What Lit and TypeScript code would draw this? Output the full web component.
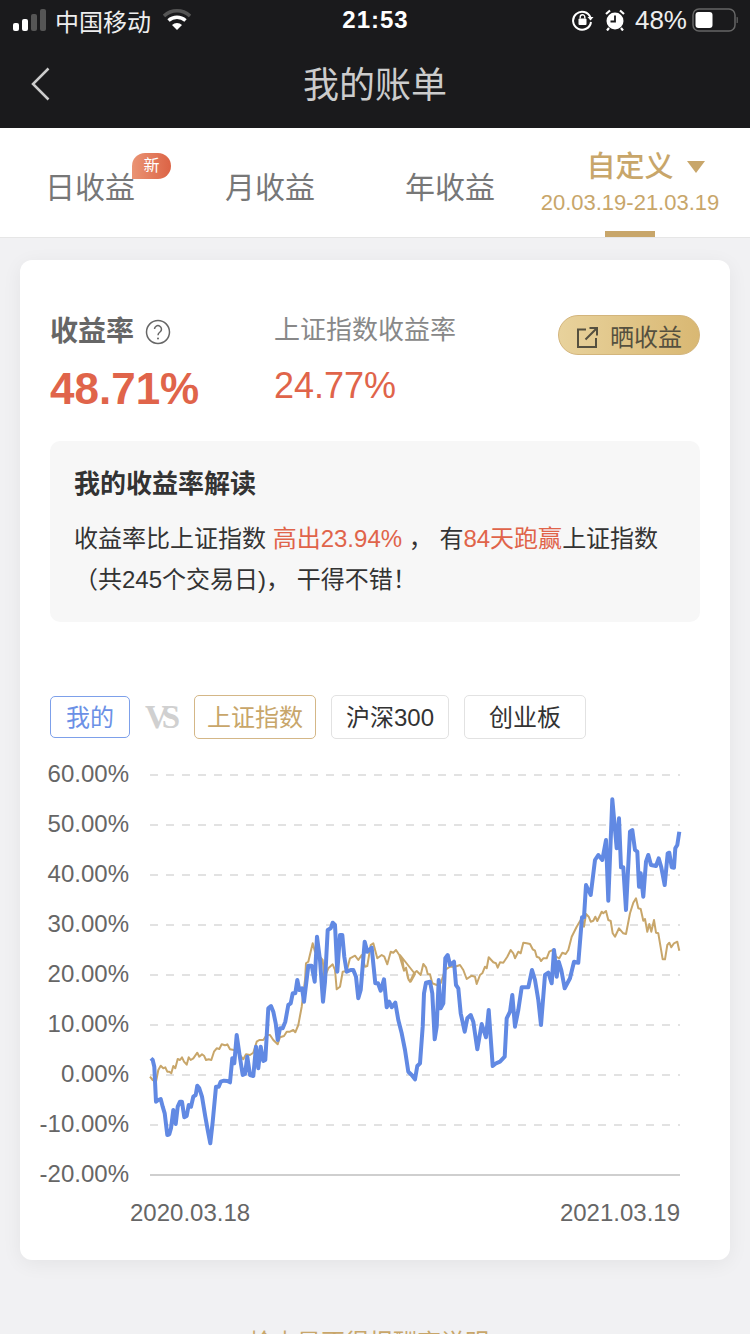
import { LitElement, css, html, svg } from "lit";
import { customElement } from "lit/decorators.js";

// traced from the chart, as [x, y] in chart pixels (zoomed crops / 3)
const zoomA = (p: number[][]) => p.map(([x, y]) => [140 + x / 3, 900 + y / 3]);
const zoomB = (p: number[][]) => p.map(([x, y]) => [400 + x / 3, 780 + y / 3]);

const BLUE = [
    ...zoomA([
        [33, 475], [38, 480], [43, 500], [48, 605], [55, 600], [62, 597], [68, 620], [74, 640], [82, 705], [88, 703],
        [93, 685], [100, 630], [107, 672], [113, 620], [120, 605], [126, 605], [133, 652], [140, 648], [146, 615],
        [153, 620], [160, 590], [167, 585], [172, 557], [178, 565], [186, 590], [196, 650], [204, 695], [211, 730],
        [218, 665], [228, 560], [236, 560], [242, 545], [252, 542], [262, 543], [270, 547], [277, 475], [283, 490],
        [290, 405], [298, 460], [308, 525], [315, 522], [322, 470], [330, 525], [340, 528], [348, 440], [355, 505],
        [362, 440], [370, 483], [376, 480], [385, 325], [393, 318], [400, 335], [407, 370], [413, 420], [420, 385],
        [428, 385], [436, 365], [445, 315], [452, 310], [458, 280], [466, 280], [472, 240], [478, 270], [486, 265],
        [492, 305], [505, 197], [515, 197], [524, 245], [531, 110], [540, 180], [549, 305], [555, 245], [563, 90],
        [572, 85], [578, 68], [585, 75], [592, 215], [600, 105], [607, 105], [613, 170], [620, 215], [632, 210],
        [640, 210], [648, 230], [655, 295], [662, 270], [674, 125], [682, 155], [695, 143], [706, 250], [714, 250],
        [722, 272], [732, 238], [740, 322], [748, 305], [755, 322], [766, 308], [775, 360], [785, 400], [795, 450],
        [805, 515], [815, 525], [825, 538],
    ]),
    ...zoomB([
        [52, 858], [60, 850], [68, 740], [72, 640], [78, 608], [90, 605], [97, 640], [104, 778], [110, 740], [116, 600],
        [122, 685], [130, 670], [136, 535], [143, 525], [150, 555], [162, 545], [168, 615], [175, 625], [182, 700],
        [194, 755], [202, 715], [212, 705], [220, 725], [232, 808], [245, 732], [258, 772], [266, 690], [278, 858],
        [288, 850], [300, 845], [314, 830], [320, 715], [330, 695], [337, 645], [345, 740], [355, 690], [365, 622],
        [385, 622], [396, 570], [405, 600], [415, 660], [423, 735], [435, 585], [445, 578], [455, 610], [462, 510],
        [470, 590], [476, 545], [484, 570], [494, 625], [510, 595], [522, 545], [535, 548], [546, 412], [552, 412],
        [558, 315], [572, 345], [585, 240], [595, 225], [607, 240], [618, 180], [625, 362], [637, 58], [650, 205],
        [657, 115], [663, 262], [670, 262], [678, 390], [690, 155], [697, 150], [705, 210], [712, 215], [717, 320],
        [722, 280], [730, 350], [738, 245], [745, 225], [753, 255], [768, 258], [776, 235], [784, 262], [794, 315],
        [803, 220], [808, 218], [815, 262], [822, 263], [826, 205], [832, 195], [838, 155],
    ]),
];

const GOLD = [
    ...zoomA([
        [30, 530], [38, 540], [48, 545], [55, 510], [62, 497], [70, 505], [76, 502], [82, 515], [88, 515], [94, 520],
        [100, 498], [106, 505], [113, 477], [120, 480], [126, 472], [132, 485], [140, 494], [146, 472], [152, 480],
        [160, 475], [172, 458], [178, 470], [186, 463], [192, 467], [198, 480], [206, 478], [214, 480], [222, 455],
        [230, 445], [238, 447], [245, 433], [255, 436], [262, 433], [270, 448], [282, 450], [292, 450], [300, 465],
        [310, 478], [318, 463], [330, 465], [340, 458], [350, 425], [358, 420], [370, 420], [380, 405], [390, 405],
        [400, 420], [413, 433], [420, 412], [432, 408], [440, 395], [450, 395], [460, 390], [466, 397], [475, 375],
        [485, 320], [495, 240], [498, 190], [505, 185], [518, 130], [525, 155], [535, 165], [548, 180], [553, 235],
        [565, 205], [578, 193], [585, 210], [590, 268], [600, 260], [608, 215], [620, 213], [630, 175], [645, 167],
        [655, 180], [665, 165], [675, 200], [682, 198], [692, 135], [700, 130], [712, 175], [725, 165], [733, 170],
        [742, 193], [752, 155], [760, 158], [768, 150], [778, 165], [792, 212], [798, 203], [806, 240], [812, 245],
        [825, 222],
    ]),
    ...zoomB([
        [0, 525], [8, 545], [12, 572], [18, 565], [24, 595], [30, 605], [42, 580], [50, 573], [62, 585], [70, 552],
        [78, 562], [83, 582], [90, 583], [97, 610], [110, 615], [122, 610], [135, 570], [150, 560], [165, 560], [180, 555],
        [190, 570], [200, 597], [215, 587], [225, 590], [230, 612], [240, 585], [247, 580], [255, 560], [260, 565],
        [266, 532], [280, 547], [288, 550], [293, 563], [300, 547], [310, 548], [322, 530], [332, 510], [340, 520],
        [345, 535], [355, 515], [362, 520], [370, 488], [380, 490], [390, 492], [398, 508], [405, 512], [410, 530],
        [418, 533], [423, 543], [430, 535], [440, 535], [448, 515], [462, 508], [468, 530], [478, 535], [487, 518],
        [497, 522], [505, 510], [515, 470], [530, 440], [545, 415], [552, 440], [558, 402], [566, 410], [572, 425],
        [580, 422], [586, 410], [592, 423], [605, 395], [610, 400], [618, 393], [625, 420], [632, 423], [638, 460],
        [645, 470], [657, 445], [670, 460], [678, 462], [690, 400], [700, 368], [708, 355], [715, 385], [722, 387],
        [730, 422], [735, 417], [742, 455], [748, 432], [754, 455], [762, 420], [768, 458], [775, 460], [788, 538],
        [795, 538], [802, 495], [808, 488], [814, 502], [822, 490], [832, 485], [838, 512],
    ]),
];

// svg sits at page (20, 750)
const toPoints = (p: number[][]) => p.map(([x, y]) => `${(x - 20).toFixed(1)},${(y - 750).toFixed(1)}`).join(" ");

const TICKS = ["60.00%", "50.00%", "40.00%", "30.00%", "20.00%", "10.00%", "0.00%", "-10.00%", "-20.00%"];

@customElement("app-root")
class AppRoot extends LitElement {
    static get styles() {
        return css`
            :host {
                display: block;
                width: 750px;
                height: 1334px;
                overflow: hidden;
                background-color: #f1f1f3;
                font-family: "Liberation Sans", "Noto Sans CJK SC", sans-serif;
            }

            .top {
                background-color: #1a1a1c;
                height: 128px;
                display: flex;
                flex-direction: column;
            }

            .status {
                height: 40px;
                padding: 0 12px 0 13px;
                display: grid;
                grid-template-columns: 1fr auto 1fr;
                align-items: center;
                color: #eee;
                font-size: 24px;
            }

            .status-left,
            .status-right {
                display: flex;
                align-items: center;
            }

            .status-right {
                justify-content: flex-end;
            }

            .carrier {
                margin: 0 12px 0 9px;
            }

            .time {
                color: #fff;
                font-weight: 700;
                letter-spacing: 1px;
            }

            .pct {
                margin: 0 5px 0 10px;
                font-size: 26px;
            }

            .lock {
                margin-right: 11px;
            }

            .nav {
                flex: 1;
                display: flex;
                align-items: center;
                justify-content: center;
                position: relative;
                padding-bottom: 4px;
                color: #ccc;
                font-size: 36px;
            }

            .back {
                position: absolute;
                left: 30px;
                top: 26px;
            }

            .tabs {
                height: 110px;
                box-sizing: border-box;
                background-color: #fff;
                border-bottom: 1px solid #e6e6e6;
                padding-right: 30px;
                display: grid;
                grid-template-columns: repeat(4, 1fr);
                align-items: center;
                font-size: 30px;
                color: #777;
                text-align: center;
            }

            .tab {
                position: relative;
                padding-top: 4px;
            }

            .badge {
                position: absolute;
                left: 132px;
                top: -6px;
                width: 39px;
                height: 26px;
                border-radius: 13px 13px 13px 0;
                background: linear-gradient(90deg, #ea9474, #dc6345);
                color: #fff;
                font-size: 16px;
                line-height: 26px;
            }

            .custom {
                position: relative;
                color: #c8a66a;
                white-space: nowrap;
                height: 109px;
                display: flex;
                flex-direction: column;
                align-items: center;
            }

            .custom-title {
                display: flex;
                align-items: center;
                gap: 13px;
                margin-top: 18px;
                font-size: 29px;
                font-weight: 500;
                line-height: 42px;
            }

            .arrow {
                width: 0;
                height: 0;
                margin-right: -31px;
                border-left: 9px solid transparent;
                border-right: 9px solid transparent;
                border-top: 12px solid #c8a66a;
            }

            .custom-date {
                font-size: 22px;
                line-height: 30px;
            }

            .custom-bar {
                position: absolute;
                bottom: 0;
                left: 65px;
                width: 50px;
                height: 6px;
                background-color: #c8a66a;
            }

            .card {
                margin: 22px 20px 0;
                height: 1000px;
                box-sizing: border-box;
                padding: 55px 30px 0;
                background-color: #fff;
                border-radius: 12px;
                box-shadow: 0 4px 20px rgba(0, 0, 0, 0.06);
            }

            .summary {
                height: 126px;
                display: grid;
                grid-template-columns: 224px 1fr auto;
            }

            .label-main {
                display: flex;
                align-items: center;
                gap: 11px;
                font-size: 28px;
                font-weight: 700;
                color: #666;
                line-height: 34px;
            }

            .value-main {
                color: #e0644a;
                font-size: 44px;
                font-weight: 700;
                line-height: 52px;
                margin-top: 14px;
            }

            .label-side {
                font-size: 26px;
                color: #888;
                line-height: 30px;
            }

            .value-side {
                color: #e0644a;
                font-size: 36px;
                line-height: 44px;
                margin-top: 19px;
            }

            .share {
                height: 40px;
                width: 142px;
                box-sizing: border-box;
                display: flex;
                align-items: center;
                justify-content: center;
                gap: 12px;
                padding-left: 1px;
                border-radius: 20px;
                border: 1px solid #d3b57c;
                background: linear-gradient(90deg, #e8d29c, #d9b873);
                color: #55503f;
                font-size: 24px;
            }

            .share-icon {
                margin-top: 4px;
            }

            .explain {
                height: 181px;
                box-sizing: border-box;
                padding: 24px 24px 0;
                border-radius: 10px;
                background-color: #f7f7f7;
                color: #333;
                font-size: 24px;
                line-height: 41px;
            }

            .explain-title {
                font-size: 26px;
                font-weight: 700;
                line-height: 38px;
                margin-bottom: 15px;
            }

            .red {
                color: #e0644a;
            }

            .compare {
                margin-top: 73px;
                display: flex;
                align-items: center;
                gap: 15px;
                font-size: 24px;
                color: #333;
            }

            .chip {
                height: 44px;
                box-sizing: border-box;
                padding-bottom: 3px;
                border: 1px solid #e2e2e2;
                border-radius: 5px;
                display: flex;
                align-items: center;
                justify-content: center;
            }

            .chip.mine {
                width: 80px;
                height: 42px;
                color: #6b90e6;
                border-color: #7da0ea;
            }

            .chip.index {
                width: 122px;
                color: #c8a66a;
                border-color: #d4b787;
            }

            .chip.hs {
                width: 118px;
            }

            .chip.gem {
                width: 122px;
            }

            .vs {
                width: 34px;
                color: #d0d0d0;
                font-family: "Liberation Serif", serif;
                font-size: 33px;
                font-weight: 700;
                letter-spacing: -7px;
            }

            .chart {
                display: block;
                margin: 11px 0 0 -30px;
            }

            .axis {
                font-size: 24px;
                fill: #666;
            }

            .more {
                margin-top: 66px;
                padding-right: 12px;
                text-align: center;
                color: #c8a66a;
                font-size: 24px;
                line-height: 34px;
            }
        `;
    }

    private renderChart() {
        return html`
            <svg class="chart" width="710" height="500" viewBox="0 0 710 500">
                ${TICKS.map((label, i) => {
                    const y = 25 + i * 50;
                    return svg`
                        <text class="axis" x="109" y=${y + 7} text-anchor="end">${label}</text>
                        <line x1="130" x2="660" y1=${y} y2=${y} stroke=${i === 8 ? "#cfcfcf" : "#e2e2e2"}
                            stroke-width="2" stroke-dasharray=${i === 8 ? "none" : "8 8"}></line>
                    `;
                })}
                <polyline points=${toPoints(GOLD)} fill="none" stroke="#c8a66a" stroke-width="2" stroke-linejoin="round"></polyline>
                <polyline points=${toPoints(BLUE)} fill="none" stroke="#6189e3" stroke-width="4" stroke-linejoin="round"></polyline>
                <text class="axis" x="110" y="471">2020.03.18</text>
                <text class="axis" x="660" y="471" text-anchor="end">2021.03.19</text>
            </svg>
        `;
    }

    protected render() {
        return html`
            <div class="top">
                <div class="status">
                    <div class="status-left">
                        <svg width="33" height="22" viewBox="0 0 33 22">
                            <rect x="0" y="14" width="6" height="8" rx="2" fill="#fff"></rect>
                            <rect x="9" y="10" width="6" height="12" rx="2" fill="#fff"></rect>
                            <rect x="18" y="5" width="6" height="17" rx="2" fill="#555"></rect>
                            <rect x="27" y="0" width="6" height="22" rx="2" fill="#555"></rect>
                        </svg>
                        <span class="carrier">中国移动</span>
                        <svg width="28" height="22" viewBox="0 0 28 22">
                            <path d="M1 7a19 19 0 0 1 26 0" fill="none" stroke="#555" stroke-width="3.5"></path>
                            <path d="M5.500 11.500a13 13 0 0 1 17 0" fill="none" stroke="#fff" stroke-width="3.5"></path>
                            <path d="M9 16a7.500 7.500 0 0 1 10 0l-5 5z" fill="#fff"></path>
                        </svg>
                    </div>
                    <span class="time">21:53</span>
                    <div class="status-right">
                        <svg class="lock" width="22" height="22" viewBox="0 0 22 22">
                            <path d="M18.500 8.500A9 9 0 1 0 19 13" fill="none" stroke="#fff" stroke-width="2"></path>
                            <path d="M15.500 8h6l-3 3.500z" fill="#fff"></path>
                            <rect x="6.500" y="9.500" width="8" height="6.500" rx="1" fill="#fff"></rect>
                            <path d="M8.200 9.500V8a2.300 2.300 0 0 1 4.600 0v1.500" fill="none" stroke="#fff" stroke-width="1.400"></path>
                        </svg>
                        <svg width="20" height="22" viewBox="0 0 20 22">
                            <circle cx="10" cy="12" r="8.500" fill="#fff"></circle>
                            <path d="M10 6.500V12.500H5.500" fill="none" stroke="#1a1a1c" stroke-width="1.800"></path>
                            <path d="M1 5l4-3.500M19 5l-4-3.500M4 19l-2 2.500M16 19l2 2.500" stroke="#fff" stroke-width="2.200"></path>
                        </svg>
                        <span class="pct">48%</span>
                        <svg width="46" height="24" viewBox="0 0 46 24">
                            <rect x="1" y="1" width="42" height="22" rx="6" fill="none" stroke="#666" stroke-width="1.500"></rect>
                            <rect x="3.500" y="4" width="17" height="16" rx="3" fill="#fff"></rect>
                            <path d="M44.500 9a3 3 0 0 1 0 6z" fill="#555"></path>
                        </svg>
                    </div>
                </div>
                <div class="nav">
                    <svg class="back" width="22" height="36" viewBox="0 0 22 36">
                        <path d="M18.500 2.500L3 18l15.500 15.500" fill="none" stroke="#ccc" stroke-width="2.500"></path>
                    </svg>
                    我的账单
                </div>
            </div>

            <div class="tabs">
                <div class="tab">日收益<span class="badge">新</span></div>
                <div class="tab">月收益</div>
                <div class="tab">年收益</div>
                <div class="custom">
                    <div class="custom-title">自定义<span class="arrow"></span></div>
                    <div class="custom-date">20.03.19-21.03.19</div>
                    <div class="custom-bar"></div>
                </div>
            </div>

            <div class="card">
                <div class="summary">
                    <div>
                        <div class="label-main">
                            收益率
                            <svg width="26" height="26" viewBox="0 0 26 26">
                                <circle cx="13" cy="13" r="11.500" fill="none" stroke="#666" stroke-width="1.500"></circle>
                                <path d="M9.500 10a3.500 3.500 0 1 1 5.500 3c-1.300.9-2 1.600-2 3.200" fill="none" stroke="#666" stroke-width="1.500"></path>
                                <circle cx="13" cy="19.500" r="1" fill="#666"></circle>
                            </svg>
                        </div>
                        <div class="value-main">48.71%</div>
                    </div>
                    <div>
                        <div class="label-side">上证指数收益率</div>
                        <div class="value-side">24.77%</div>
                    </div>
                    <div class="share">
                        <svg class="share-icon" width="21" height="21" viewBox="0 0 21 21">
                            <path d="M9 2.500H1V20H19V11" fill="none" stroke="#55503f" stroke-width="2"></path>
                            <path d="M8.500 12.500L19 2M12.500 1H20V8.500" fill="none" stroke="#55503f" stroke-width="2"></path>
                        </svg>
                        晒收益
                    </div>
                </div>

                <div class="explain">
                    <div class="explain-title">我的收益率解读</div>
                    <div>收益率比上证指数 <span class="red">高出23.94%</span> ， 有<span class="red">84天跑赢</span>上证指数</div>
                    <div>（共245个交易日)， 干得不错！</div>
                </div>

                <div class="compare">
                    <div class="chip mine">我的</div>
                    <div class="vs">VS</div>
                    <div class="chip index">上证指数</div>
                    <div class="chip hs">沪深300</div>
                    <div class="chip gem">创业板</div>
                </div>

                ${this.renderChart()}
            </div>

            <div class="more">检查是否得报酬率说明</div>
        `;
    }
}

export default AppRoot;
